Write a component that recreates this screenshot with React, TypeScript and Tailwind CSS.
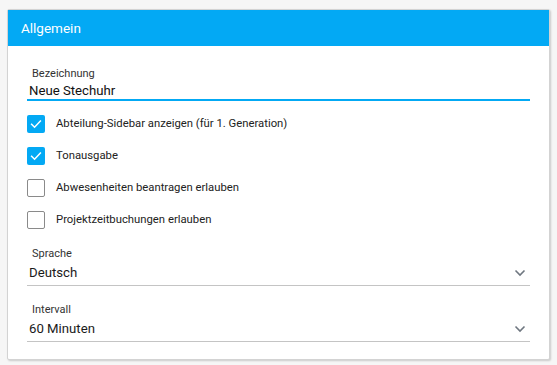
import React, { useState } from 'react';

const font = { fontFamily: 'Roboto, "Noto Sans", sans-serif' };

function Check({ checked, label, onToggle }: { checked: boolean; label: string; onToggle: () => void }) {
  return (
    <div className="flex h-[32px] items-center cursor-pointer" onClick={onToggle}>
      {checked ? (
        <div className="w-[18px] h-[18px] rounded-[2px] bg-[#03a9f4] flex items-center justify-center">
          <svg width="14" height="14" viewBox="0 0 24 24" fill="none" stroke="white" strokeWidth="2.6" strokeLinecap="square">
            <path d="M4.5 12.5l5 5L19.5 7" />
          </svg>
        </div>
      ) : (
        <div className="w-[18px] h-[18px] rounded-[2px] border-[1.5px] border-[#8a8a8a] bg-white" />
      )}
      <span className="ml-[11px] text-[11.3px] text-[#222]">{label}</span>
    </div>
  );
}

function SelectField({ label, value, className }: { label: string; value: string; className?: string }) {
  return (
    <div className={className}>
      <div className="pl-[5px] text-[11px] leading-[16px] text-[#333]">{label}</div>
      <div className="flex items-center justify-between h-[24px] border-b border-[#c4c4c4] pl-[2px] pr-[4px] pb-[2px]">
        <span className="text-[13.2px] leading-[20px] text-[#1a1a1a]">{value}</span>
        <svg width="12" height="8" viewBox="0 0 12 8" fill="none" stroke="#6f7780" strokeWidth="1.6">
          <path d="M1.5 1.5L6 6l4.5-4.5" />
        </svg>
      </div>
    </div>
  );
}

export default function App() {
  const [name, setName] = useState('Neue Stechuhr');
  const [opts, setOpts] = useState([true, true, false, false]);
  const labels = [
    'Abteilung-Sidebar anzeigen (für 1. Generation)',
    'Tonausgabe',
    'Abwesenheiten beantragen erlauben',
    'Projektzeitbuchungen erlauben',
  ];

  const toggle = (i: number) => setOpts((prev) => prev.map((v, j) => (j === i ? !v : v)));

  return (
    <div className="min-h-screen bg-[#f6f6f6] pl-[7px] pt-[9px] pr-[7px]" style={font}>
      <div className="w-[543px] bg-white border border-[#d3d3d3] rounded-[2px] shadow-[1px_1px_2px_rgba(0,0,0,0.18)]">
        <div className="h-[36px] bg-[#03a9f4] flex items-center px-[13px]">
          <h3 className="text-[13.5px] text-white">Allgemein</h3>
        </div>

        <div className="px-[19px] pb-[17px]">
          <div className="mt-[20px]">
            <label className="block pl-[5px] text-[11px] leading-[16px] text-[#333]">Bezeichnung</label>
            <input
              value={name}
              onChange={(e) => setName(e.target.value)}
              className="block w-full h-[19px] pl-[2px] text-[13.2px] leading-[17px] text-[#111] border-b-2 border-[#03a9f4] outline-none"
            />
          </div>

          <div className="mt-[7px]">
            {labels.map((l, i) => (
              <Check key={l} checked={opts[i]} label={l} onToggle={() => toggle(i)} />
            ))}
          </div>

          <SelectField label="Sprache" value="Deutsch" className="mt-[10px]" />
          <SelectField label="Intervall" value="60 Minuten" className="mt-[16px]" />
        </div>
      </div>
    </div>
  );
}
